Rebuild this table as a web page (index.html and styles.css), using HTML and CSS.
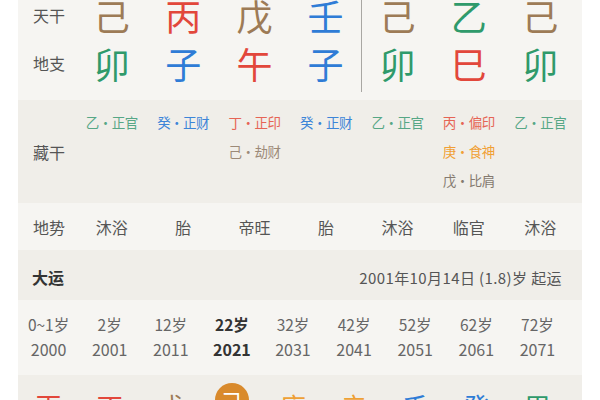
FILE: index.html
```html
<!DOCTYPE html>
<html lang="zh">
<head>
<meta charset="utf-8">
<link rel="stylesheet" href="styles.css">
</head>
<body>
<div class="card">
  <div class="pillars">
    <div class="lbl">天干</div>
    <div class="big brown">己</div>
    <div class="big red">丙</div>
    <div class="big brown">戊</div>
    <div class="big blue sep">壬</div>
    <div class="big brown">己</div>
    <div class="big green">乙</div>
    <div class="big brown">己</div>
    <div class="lbl low">地支</div>
    <div class="big green low">卯</div>
    <div class="big blue low">子</div>
    <div class="big red low">午</div>
    <div class="big blue low sep">子</div>
    <div class="big green low">卯</div>
    <div class="big red low">巳</div>
    <div class="big green low">卯</div>
  </div>

  <div class="hidden">
    <div class="lbl">藏干</div>
    <div class="hcol"><span class="hg">乙·正官</span></div>
    <div class="hcol"><span class="hb">癸·正财</span></div>
    <div class="hcol"><span class="hr">丁·正印</span><span class="hn">己·劫财</span></div>
    <div class="hcol"><span class="hb">癸·正财</span></div>
    <div class="hcol"><span class="hg">乙·正官</span></div>
    <div class="hcol"><span class="hr">丙·偏印</span><span class="ho">庚·食神</span><span class="hk">戊·比肩</span></div>
    <div class="hcol"><span class="hg">乙·正官</span></div>
  </div>

  <div class="dishi">
    <div class="lbl">地势</div>
    <div class="dc">沐浴</div>
    <div class="dc">胎</div>
    <div class="dc">帝旺</div>
    <div class="dc">胎</div>
    <div class="dc">沐浴</div>
    <div class="dc">临官</div>
    <div class="dc">沐浴</div>
  </div>

  <div class="dayun-head">
    <span class="dy-title">大运</span>
    <span class="dy-start">2001年10月14日 (1.8)岁 起运</span>
  </div>

  <div class="ages">
    <div class="ac"><span class="age">0~1岁</span><span class="yr">2000</span></div>
    <div class="ac"><span class="age">2岁</span><span class="yr">2001</span></div>
    <div class="ac"><span class="age">12岁</span><span class="yr">2011</span></div>
    <div class="ac cur"><span class="age">22岁</span><span class="yr">2021</span></div>
    <div class="ac"><span class="age">32岁</span><span class="yr">2031</span></div>
    <div class="ac"><span class="age">42岁</span><span class="yr">2041</span></div>
    <div class="ac"><span class="age">52岁</span><span class="yr">2051</span></div>
    <div class="ac"><span class="age">62岁</span><span class="yr">2061</span></div>
    <div class="ac"><span class="age">72岁</span><span class="yr">2071</span></div>
  </div>

  <div class="stems">
    <div class="sc"><span class="st red">丙</span></div>
    <div class="sc"><span class="st red">丁</span></div>
    <div class="sc"><span class="st brown">戊</span></div>
    <div class="sc"><span class="st circle">己</span></div>
    <div class="sc"><span class="st orange">庚</span></div>
    <div class="sc"><span class="st orange">辛</span></div>
    <div class="sc"><span class="st blue">壬</span></div>
    <div class="sc"><span class="st blue">癸</span></div>
    <div class="sc"><span class="st green">甲</span></div>
  </div>
</div>
</body>
</html>
```

FILE: styles.css
```css
html, body {
  margin: 0;
  padding: 0;
  background: #ffffff;
  font-family: "Noto Sans CJK SC", "Noto Sans", sans-serif;
}

.card {
  width: 564px;
  margin: -10px 18px 0;
  background: #f6f5f2;
}

.brown { color: #9d7b56; }
.red { color: #e2473b; }
.blue { color: #2f7cd6; }
.green { color: #2f9a6b; }
.orange { color: #eea035; }

.lbl {
  display: flex;
  align-items: center;
  justify-content: center;
  padding-left: 4px;
  font-size: 16px;
  color: #555;
}

.pillars {
  display: grid;
  grid-template-columns: 58px repeat(7, 1fr);
  grid-template-rows: 50px 52px;
  padding: 0 6px 8px 0;
}

.big {
  display: flex;
  align-items: center;
  justify-content: center;
  font-size: 36px;
  line-height: 1;
}

.low {
  padding-bottom: 6px;
}

.sep {
  border-right: 1.5px solid #a9a7a3;
}

.hidden {
  display: grid;
  grid-template-columns: 58px repeat(7, 1fr);
  padding: 8px 6px 8px 0;
  min-height: 87px;
  background: #f0eee9;
}

.hcol {
  display: flex;
  flex-direction: column;
  align-items: center;
  font-size: 13.5px;
  line-height: 29px;
  letter-spacing: -0.5px;
}

.hg { color: #56a786; }
.hb { color: #3d85d8; }
.hr { color: #e66455; }
.hn { color: #9c8a78; }
.ho { color: #f0a035; }
.hk { color: #857a70; }

.dishi {
  display: grid;
  grid-template-columns: 58px repeat(7, 1fr);
  height: 47px;
  padding-right: 6px;
  background: #f6f5f2;
}

.dc {
  display: flex;
  align-items: center;
  justify-content: center;
  font-size: 16px;
  color: #555;
}

.dayun-head {
  display: flex;
  align-items: center;
  justify-content: space-between;
  height: 50px;
  padding: 4px 20px 0 14px;
  box-sizing: border-box;
  background: #f0eee9;
}

.dy-title {
  font-size: 16px;
  font-weight: 700;
  color: #333;
}

.dy-start {
  font-size: 15px;
  letter-spacing: 0.4px;
  color: #555;
}

.ages {
  display: grid;
  grid-template-columns: repeat(9, 1fr);
  padding: 12px 14px 13px 0;
  background: #f6f5f2;
}

.ac {
  display: flex;
  flex-direction: column;
  align-items: center;
  line-height: 25px;
  color: #666;
}

.age { font-size: 15.5px; }
.yr { font-size: 16px; }

.ac.cur {
  color: #333;
  font-weight: 700;
}

.stems {
  display: grid;
  grid-template-columns: repeat(9, 1fr);
  padding: 8px 14px 20px 0;
  background: #f0eee9;
}

.sc {
  display: flex;
  justify-content: center;
}

.st {
  display: flex;
  align-items: center;
  justify-content: center;
  width: 34px;
  height: 34px;
  margin-top: 6px;
  font-size: 26px;
  line-height: 1;
}

.st.circle {
  margin-top: 0;
  border-radius: 50%;
  background: #d98a2c;
  color: #fff;
  font-size: 22px;
}
```
